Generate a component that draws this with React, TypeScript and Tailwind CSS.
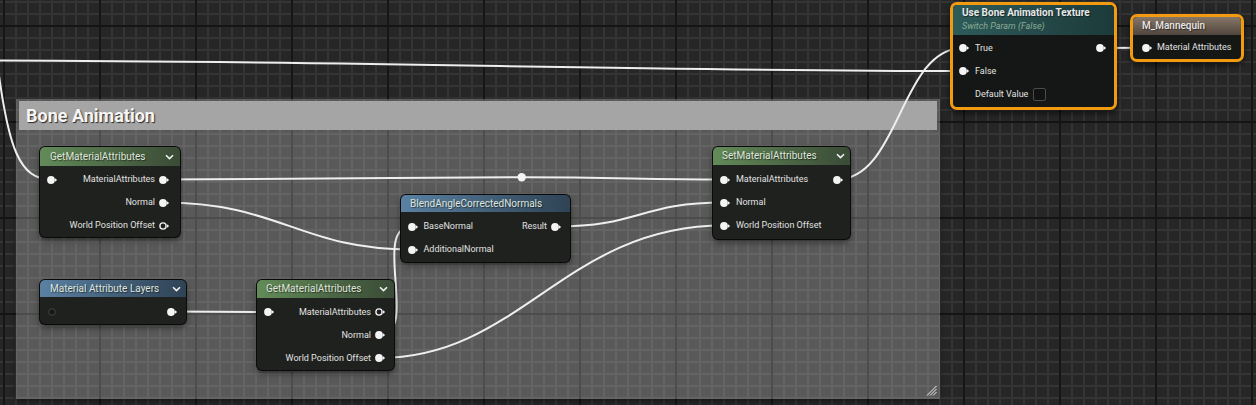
import React from 'react';

type PK = 'filled' | 'hollow' | 'dark';

function Pin({ k = 'filled' }: { k?: PK }) {
  return (
    <svg width="12" height="10" viewBox="0 0 12 10" className="block shrink-0">
      {k === 'filled' && <circle cx="5" cy="5" r="3.9" fill="#f4f4f4" />}
      {k === 'hollow' && <circle cx="5" cy="5" r="3.1" fill="none" stroke="#f0f0f0" strokeWidth="1.4" />}
      {k === 'dark' && <circle cx="5" cy="5" r="3.2" fill="#161616" stroke="#3a3a3a" strokeWidth="1.2" />}
      {k !== 'dark' && <path d="M9 3.3 L11.2 5 L9 6.7 Z" fill="#f0f0f0" />}
    </svg>
  );
}

function Chevron() {
  return (
    <svg width="9" height="6" viewBox="0 0 9 6" className="block shrink-0">
      <path d="M1 1.2 L4.5 4.6 L8 1.2" fill="none" stroke="#f0f0f0" strokeWidth="1.6" />
    </svg>
  );
}

const shell =
  'absolute rounded-[5px] overflow-hidden bg-[#1f211f] shadow-[0_0_0_1px_#0a0a0a,0_3px_6px_rgba(0,0,0,0.55)]';
const label = 'text-[9px] leading-none text-[#e2e2e2] whitespace-nowrap';
const htext = 'text-[10px] leading-none text-[#dfe4dc] whitespace-nowrap [text-shadow:1px_1px_1px_rgba(0,0,0,0.5)]';
const green = 'bg-linear-to-r from-[#638b59] to-[#3a4b36]';
const blue = 'bg-linear-to-r from-[#5a81a3] to-[#2f4355]';

function Grid() {
  return (
    <svg className="absolute left-0 top-0" width="1256" height="405">
      <defs>
        <pattern id="minor" width="12" height="12" patternUnits="userSpaceOnUse" x="3" y="25">
          <rect width="12" height="12" fill="#262626" />
          <rect width="2" height="12" fill="#343434" />
          <rect width="12" height="2" fill="#343434" />
        </pattern>
        <pattern id="major" width="96" height="96" patternUnits="userSpaceOnUse" x="3" y="25">
          <rect width="2" height="96" fill="#161616" />
          <rect width="96" height="2" fill="#141414" />
        </pattern>
      </defs>
      <rect width="1256" height="405" fill="url(#minor)" />
      <rect width="1256" height="405" fill="url(#major)" />
    </svg>
  );
}

function Wires() {
  return (
    <svg className="absolute left-0 top-0" width="1256" height="405" fill="none" stroke="#eeeeee" strokeWidth="2">
      <path d="M -10 60.5 C 350 61, 650 71, 963 71" />
      <path d="M -3 60 C 8 150, 20 179.5, 51.5 179.5" />
      <path d="M 163 179.5 C 300 179.5, 400 177.3, 521.7 177.3" />
      <path d="M 521.7 177.3 C 620 177.3, 640 179.5, 724 179.5" />
      <path d="M 163 202.5 C 280 202.5, 300 249.5, 411.5 249.5" />
      <path d="M 171 311.5 L 267.5 312" />
      <path d="M 379.5 335 C 420 335, 371 226.5, 411.5 226.5" />
      <path d="M 379.5 358 C 520 358, 565 225.5, 724 225.5" />
      <path d="M 555.5 226.5 C 640 226.5, 640 202.5, 724 202.5" />
      <path d="M 836.5 179.5 C 900 179.5, 900 48, 963 48" />
      <path d="M 1100 48 L 1146 47.7" />
      <circle cx="521.7" cy="177.3" r="4.2" fill="#f4f4f4" stroke="none" />
    </svg>
  );
}

export default function App() {
  return (
    <div className="relative w-[1256px] h-[405px] overflow-hidden bg-[#262626] font-['Roboto','Liberation_Sans',sans-serif]">
      <Grid />

      {/* Comment box */}
      <div className="absolute left-[16px] top-[99px] w-[924px] h-[300px] bg-white/[0.24] shadow-[0_2px_5px_rgba(0,0,0,0.45)] pt-[2px] px-[3px]">
        <div className="h-[29px] bg-[#a5a5a5] flex items-center pl-[7px]">
          <span className="text-[18px] leading-none font-bold text-[#f6f6f6] [text-shadow:1px_1px_1px_rgba(0,0,0,0.75)]">
            Bone Animation
          </span>
        </div>
        <svg className="absolute right-[3px] bottom-[3px]" width="11" height="11" viewBox="0 0 11 11" fill="none" stroke="#f0f0f0" strokeWidth="1">
          <path d="M1 10.5 L10.5 1" />
          <path d="M4 10.5 L10.5 4" />
          <path d="M7 10.5 L10.5 7" />
        </svg>
      </div>

      <Wires />

      {/* GetMaterialAttributes (top) */}
      <div className={shell + ' left-[40px] top-[147px] w-[140px]'}>
        <div className={'h-[19px] flex items-center justify-between pl-[10px] pr-[6px] ' + green}>
          <span className={htext}>GetMaterialAttributes</span>
          <Chevron />
        </div>
        <div className="pt-[2px]">
          <div className="h-[23px] flex items-center pl-[6px] pr-[10px]">
            <Pin />
            <div className="flex-1" />
            <span className={label}>MaterialAttributes</span>
            <div className="w-[3px]" />
            <Pin />
          </div>
          <div className="h-[23px] flex items-center justify-end pr-[10px]">
            <span className={label}>Normal</span>
            <div className="w-[3px]" />
            <Pin />
          </div>
          <div className="h-[23px] flex items-center justify-end pr-[10px]">
            <span className={label}>World Position Offset</span>
            <div className="w-[3px]" />
            <Pin k="hollow" />
          </div>
        </div>
      </div>

      {/* Material Attribute Layers */}
      <div className={shell + ' left-[40px] top-[280px] w-[146px]'}>
        <div className={'h-[17px] flex items-center justify-between pl-[10px] pr-[5px] ' + blue}>
          <span className={htext}>Material Attribute Layers</span>
          <Chevron />
        </div>
        <div className="pt-[3px] pb-[1px]">
          <div className="h-[23px] flex items-center justify-between pl-[7px] pr-[8px]">
            <Pin k="dark" />
            <Pin />
          </div>
        </div>
      </div>

      {/* GetMaterialAttributes (bottom) */}
      <div className={shell + ' left-[257px] top-[280px] w-[137px]'}>
        <div className={'h-[18px] flex items-center justify-between pl-[9px] pr-[6px] ' + green}>
          <span className={htext}>GetMaterialAttributes</span>
          <Chevron />
        </div>
        <div className="pt-[2.5px] pb-[0.5px]">
          <div className="h-[23px] flex items-center pl-[5.5px] pr-[8px]">
            <Pin />
            <div className="flex-1" />
            <span className={label}>MaterialAttributes</span>
            <div className="w-[3px]" />
            <Pin k="hollow" />
          </div>
          <div className="h-[23px] flex items-center justify-end pr-[8px]">
            <span className={label}>Normal</span>
            <div className="w-[3px]" />
            <Pin />
          </div>
          <div className="h-[23px] flex items-center justify-end pr-[8px]">
            <span className={label}>World Position Offset</span>
            <div className="w-[3px]" />
            <Pin />
          </div>
        </div>
      </div>

      {/* BlendAngleCorrectedNormals */}
      <div className={shell + ' left-[401px] top-[195px] w-[169px]'}>
        <div className={'h-[17px] flex items-center pl-[9px] ' + blue}>
          <span className={htext}>BlendAngleCorrectedNormals</span>
        </div>
        <div className="pt-[3px] pb-[1px]">
          <div className="h-[23px] flex items-center pl-[5.5px] pr-[8px]">
            <Pin />
            <span className={label + ' ml-[5px]'}>BaseNormal</span>
            <div className="flex-1" />
            <span className={label}>Result</span>
            <div className="w-[3px]" />
            <Pin />
          </div>
          <div className="h-[23px] flex items-center pl-[5.5px]">
            <Pin />
            <span className={label + ' ml-[5px]'}>AdditionalNormal</span>
          </div>
        </div>
      </div>

      {/* SetMaterialAttributes */}
      <div className={shell + ' left-[713px] top-[147px] w-[137px]'}>
        <div className={'h-[18px] flex items-center justify-between pl-[9px] pr-[5px] ' + green}>
          <span className={htext}>SetMaterialAttributes</span>
          <Chevron />
        </div>
        <div className="pt-[3px] pb-[2px]">
          <div className="h-[23px] flex items-center pl-[6px] pr-[6.5px]">
            <Pin />
            <span className={label + ' ml-[5px]'}>MaterialAttributes</span>
            <div className="flex-1" />
            <Pin />
          </div>
          <div className="h-[23px] flex items-center pl-[6px]">
            <Pin />
            <span className={label + ' ml-[5px]'}>Normal</span>
          </div>
          <div className="h-[23px] flex items-center pl-[6px]">
            <Pin />
            <span className={label + ' ml-[5px]'}>World Position Offset</span>
          </div>
        </div>
      </div>

      {/* Use Bone Animation Texture */}
      <div className="absolute left-[950px] top-[2px] w-[167px] h-[108px] rounded-[7px] border-[3px] border-[#f29b11] bg-[#141715] overflow-hidden shadow-[0_3px_6px_rgba(0,0,0,0.6)]">
        <div className="h-[30px] pl-[9px] pt-[2px] bg-linear-to-r from-[#2e5c5a] to-[#1c3a3a] rounded-t-[4px]">
          <div className="text-[10px] leading-[12px] font-bold text-[#e8e8e8] whitespace-nowrap [text-shadow:1px_1px_1px_rgba(0,0,0,0.5)]">
            Use Bone Animation Texture
          </div>
          <div className="text-[9px] leading-[12px] italic text-[#8aab94] mt-[1px] whitespace-nowrap">Switch Param (False)</div>
        </div>
        <div className="pt-[1.5px]">
          <div className="h-[23px] flex items-center pl-[5px] pr-[7px]">
            <Pin />
            <span className={label + ' ml-[5px]'}>True</span>
            <div className="flex-1" />
            <Pin />
          </div>
          <div className="h-[23px] flex items-center pl-[5px]">
            <Pin />
            <span className={label + ' ml-[5px]'}>False</span>
          </div>
          <div className="h-[23px] flex items-center pl-[22px]">
            <span className={label + ' text-[#d0d0d0]'}>Default Value</span>
            <div className="ml-[5px] w-[13px] h-[13px] border border-[#4c4c4c] bg-[#121212] rounded-[2px]" />
          </div>
        </div>
      </div>

      {/* M_Mannequin */}
      <div className="absolute left-[1130px] top-[14px] w-[114px] h-[48px] rounded-[7px] border-[3px] border-[#f29b11] bg-[#151715] overflow-hidden shadow-[0_3px_6px_rgba(0,0,0,0.6)]">
        <div className="h-[18px] flex items-center pl-[9px] bg-linear-to-b from-[#877768] to-[#50463e] rounded-t-[4px]">
          <span className="text-[10px] leading-none font-medium text-[#e6e6e6] whitespace-nowrap [text-shadow:1px_1px_1px_rgba(0,0,0,0.5)]">
            M_Mannequin
          </span>
        </div>
        <div className="pt-[1px]">
          <div className="h-[23px] flex items-center pl-[8px]">
            <Pin />
            <span className={label + ' ml-[4px]'}>Material Attributes</span>
          </div>
        </div>
      </div>
    </div>
  );
}
